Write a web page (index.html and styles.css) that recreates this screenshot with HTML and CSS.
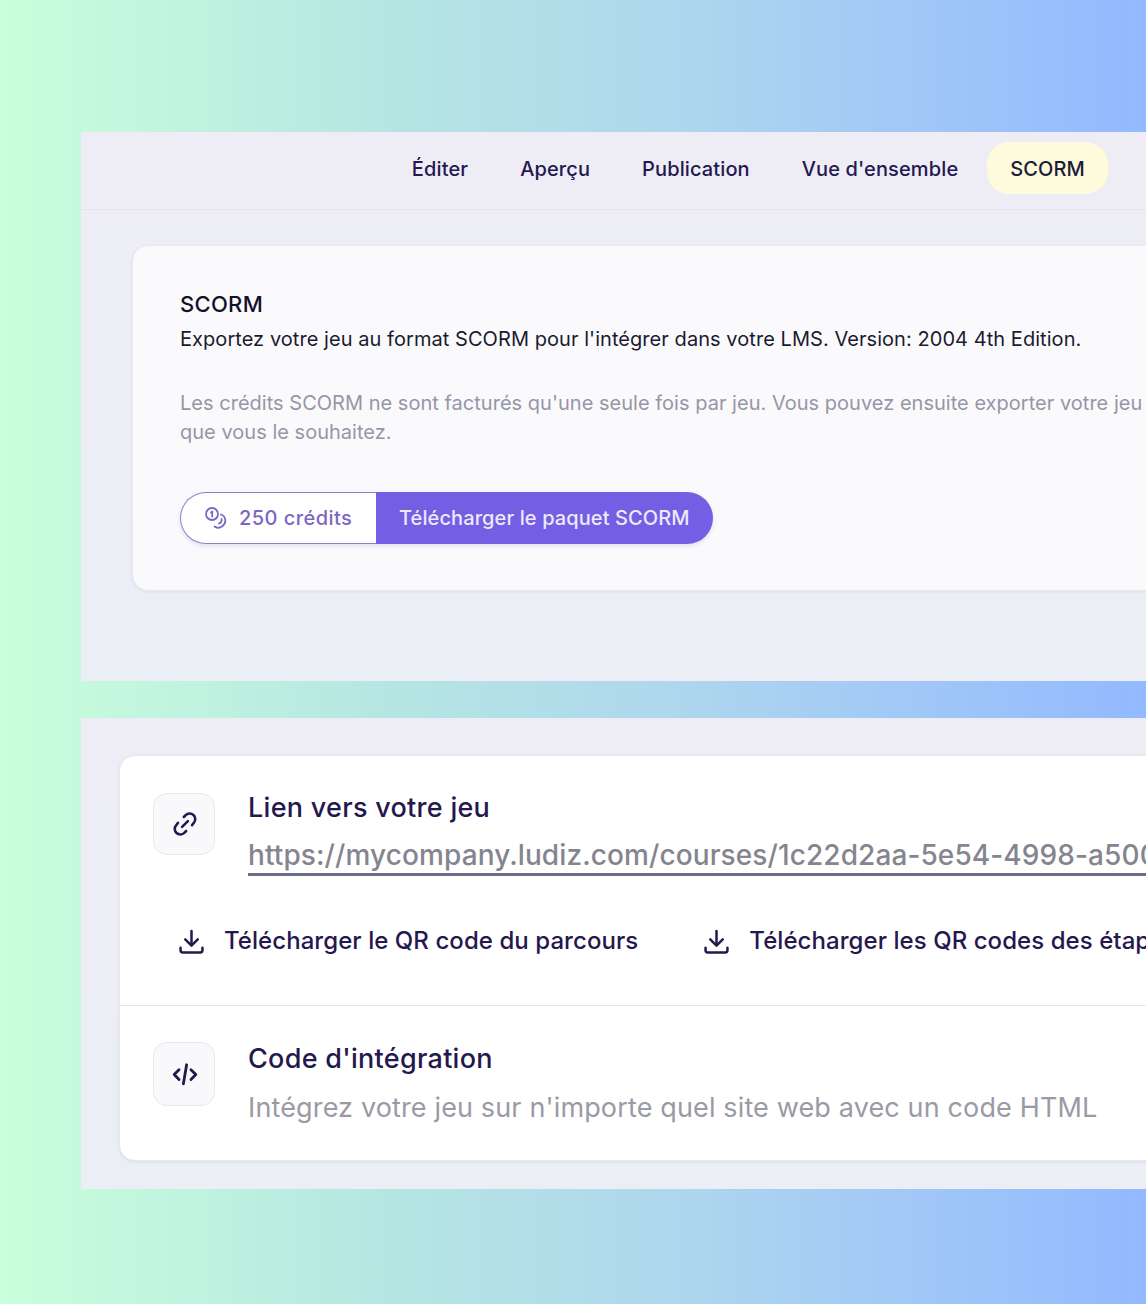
FILE: index.html
```html
<!DOCTYPE html>
<html lang="fr">
<head>
<meta charset="utf-8">
<title>SCORM</title>
<link rel="stylesheet" href="styles.css">
</head>
<body>
<section class="panel panel-top">
  <nav class="tabs">
    <a class="tab">Éditer</a>
    <a class="tab">Aperçu</a>
    <a class="tab">Publication</a>
    <a class="tab">Vue d'ensemble</a>
    <a class="tab tab-active">SCORM</a>
  </nav>
  <div class="scorm-card">
    <h2 class="scorm-title">SCORM</h2>
    <p class="scorm-desc">Exportez votre jeu au format SCORM pour l'intégrer dans votre LMS. Version: 2004 4th Edition.</p>
    <p class="scorm-note">Les crédits SCORM ne sont facturés qu'une seule fois par jeu. Vous pouvez ensuite exporter votre jeu autant de fois<br>que vous le souhaitez.</p>
    <div class="split-button">
      <span class="credits">
        <svg class="coin-icon" viewBox="0 0 24 24" fill="none" stroke="currentColor" stroke-width="1.800" stroke-linecap="round" stroke-linejoin="round">
          <circle cx="8" cy="8" r="6"/>
          <path d="M7 6.500l1.200-1v5"/>
          <path d="M17 8.500a6.500 6.500 0 0 1 1.500 11.500 6.500 6.500 0 0 1-8 .5"/>
          <path d="M17.500 13a3.500 3.500 0 0 1-2.500 4.500"/>
        </svg>
        250 crédits
      </span>
      <span class="download-scorm">Télécharger le paquet SCORM</span>
    </div>
  </div>
</section>
<section class="panel panel-bottom">
  <div class="share-card">
    <div class="share-head">
      <div class="icon-box">
        <svg class="box-icon link-icon" viewBox="0 0 24 24" fill="none" stroke="currentColor" stroke-width="2.200" stroke-linecap="round" stroke-linejoin="round">
          <path d="M9.500 14.500l5-5"/>
          <path d="M11 6l1.500-1.500a4.700 4.700 0 0 1 7 6.500l-1.500 2"/>
          <path d="M13 18l-1.500 1.500a4.700 4.700 0 0 1-7-6.500L6 11"/>
        </svg>
      </div>
      <div class="head-text">
        <h3 class="head-title">Lien vers votre jeu</h3>
        <a class="head-link">https://mycompany.ludiz.com/courses/1c22d2aa-5e54-4998-a500-7d3c1e9f0b42</a>
      </div>
    </div>
    <div class="qr-row">
      <a class="qr-link">
        <svg class="dl-icon" viewBox="0 0 24 24" fill="none" stroke="currentColor" stroke-width="2.400" stroke-linecap="round" stroke-linejoin="round">
          <path d="M12 2v13"/><path d="M6 10l6 6 6-6"/><path d="M1.500 18v2.500a2 2 0 0 0 2 2h17a2 2 0 0 0 2-2V18"/>
        </svg>
        Télécharger le QR code du parcours
      </a>
      <a class="qr-link">
        <svg class="dl-icon" viewBox="0 0 24 24" fill="none" stroke="currentColor" stroke-width="2.400" stroke-linecap="round" stroke-linejoin="round">
          <path d="M12 2v13"/><path d="M6 10l6 6 6-6"/><path d="M1.500 18v2.500a2 2 0 0 0 2 2h17a2 2 0 0 0 2-2V18"/>
        </svg>
        Télécharger les QR codes des étapes
      </a>
    </div>
    <div class="share-head share-embed">
      <div class="icon-box icon-box-tall">
        <svg class="box-icon" viewBox="0 0 24 24" fill="none" stroke="currentColor" stroke-width="2.600" stroke-linecap="round" stroke-linejoin="round">
          <path d="M6.500 8L2 12.500 6.500 17"/><path d="M17.500 8L22 12.500 17.500 17"/><path d="M13.500 3.500L10.500 21"/>
        </svg>
      </div>
      <div class="head-text">
        <h3 class="head-title">Code d'intégration</h3>
        <p class="head-sub">Intégrez votre jeu sur n'importe quel site web avec un code HTML</p>
      </div>
    </div>
  </div>
</section>
</body>
</html>
```
FILE: styles.css
```css
* { box-sizing: border-box; }
html, body { margin: 0; padding: 0; }
body {
  width: 1146px;
  height: 1304px;
  overflow: hidden;
  padding: 132px 0 0 81px;
  background: linear-gradient(90deg, #c9ffdb 0%, #b5e5e3 35%, #aed6ee 60%, #93b9ff 100%);
  font-family: Inter, "Liberation Sans", sans-serif;
  color: #25184f;
}
.panel {
  width: 1065px;
  overflow: hidden;
  background: linear-gradient(180deg, #eeedf6 0%, #ebeef5 100%);
}
.panel-top { height: 549px; }
.panel-bottom { height: 471px; margin-top: 37px; padding: 37px 0 0 38px; }

.tabs {
  height: 78px;
  display: flex;
  align-items: flex-start;
  justify-content: flex-end;
  gap: 6px;
  padding: 10px 38px 0 0;
  border-bottom: 1px solid #e4e4ec;
}
.tab {
  display: block;
  padding: 0 23px;
  height: 52px;
  line-height: 54px;
  font-size: 20px;
  font-weight: 500;
  letter-spacing: .12px;
  white-space: nowrap;
}
.tab-active {
  background: #fdfbdc;
  border-radius: 22px;
  color: #1d1a3a;
}

.scorm-card {
  width: 1200px;
  height: 346px;
  margin: 35px 0 0 51px;
  padding: 44px 47px 0;
  background: #fafafc;
  border: 1px solid #e9e9f0;
  border-radius: 16px;
  box-shadow: 0 1px 3px rgba(60, 60, 90, .08);
}
.scorm-title {
  margin: 0;
  font-size: 22px;
  line-height: 28px;
  font-weight: 550;
  letter-spacing: .3px;
  color: #12122a;
}
.scorm-desc {
  margin: 7px 0 0;
  font-size: 20px;
  line-height: 29px;
  letter-spacing: .055px;
  color: #1b1b30;
  white-space: nowrap;
}
.scorm-note {
  margin: 35px 0 0;
  font-size: 20px;
  line-height: 29px;
  letter-spacing: .02px;
  color: #9696a6;
  white-space: nowrap;
}
.split-button {
  display: inline-flex;
  height: 52px;
  margin-top: 45px;
  border-radius: 26px;
  box-shadow: 0 2px 4px rgba(80, 60, 180, .15);
  font-size: 20px;
  font-weight: 500;
}
.credits {
  display: flex;
  align-items: center;
  gap: 11px;
  width: 196px;
  padding-left: 23px;
  background: #fff;
  border: 1px solid #8e82c4;
  border-right: 0;
  border-radius: 26px 0 0 26px;
  letter-spacing: .45px;
  color: #7a68c4;
}
.coin-icon { width: 24px; height: 24px; }
.download-scorm {
  display: flex;
  align-items: center;
  width: 337px;
  padding-left: 23px;
  background: #735ee4;
  border-radius: 0 26px 26px 0;
  letter-spacing: .1px;
  color: #ece9fb;
}

.share-card {
  width: 1200px;
  height: 406px;
  background: #fff;
  border: 1px solid #e8e8ef;
  border-radius: 16px;
  box-shadow: 0 1px 3px rgba(60, 60, 90, .1);
  padding-top: 37px;
}
.share-head {
  display: flex;
  gap: 33px;
  padding-left: 33px;
}
.icon-box {
  flex: none;
  width: 62px;
  height: 62px;
  display: flex;
  align-items: center;
  justify-content: center;
  background: #f9f9fb;
  border: 1px solid #e8e8ec;
  border-radius: 14px;
  color: #25184f;
}
.icon-box-tall { height: 64px; }
.box-icon { width: 26px; height: 26px; margin-left: 2px; }
.link-icon { width: 28px; height: 28px; margin-top: -1px; }
.head-title {
  margin: 0;
  font-size: 27px;
  line-height: 30px;
  font-weight: 500;
  letter-spacing: .28px;
  color: #25184f;
}
.head-link {
  display: inline-block;
  margin-top: 15px;
  padding-bottom: 1px;
  font-size: 28px;
  line-height: 34px;
  font-weight: 500;
  letter-spacing: .1px;
  color: #85858f;
  white-space: nowrap;
  border-bottom: 3px solid #6f6d86;
}
.head-sub {
  margin: 17px 0 0;
  font-size: 27px;
  line-height: 34px;
  letter-spacing: .14px;
  color: #9a9aa6;
  white-space: nowrap;
}
.qr-row {
  display: flex;
  gap: 66px;
  height: 130px;
  padding: 48px 0 0 59px;
  border-bottom: 1px solid #e6e6ea;
}
.qr-link {
  display: flex;
  align-items: flex-start;
  gap: 20px;
  font-size: 24px;
  line-height: 34px;
  font-weight: 500;
  letter-spacing: .06px;
  color: #25184f;
  white-space: nowrap;
}
.dl-icon { width: 25px; height: 25px; margin-top: 5px; }
.share-embed { padding-top: 36px; }
.share-embed .head-text { padding-top: 2px; }
```
